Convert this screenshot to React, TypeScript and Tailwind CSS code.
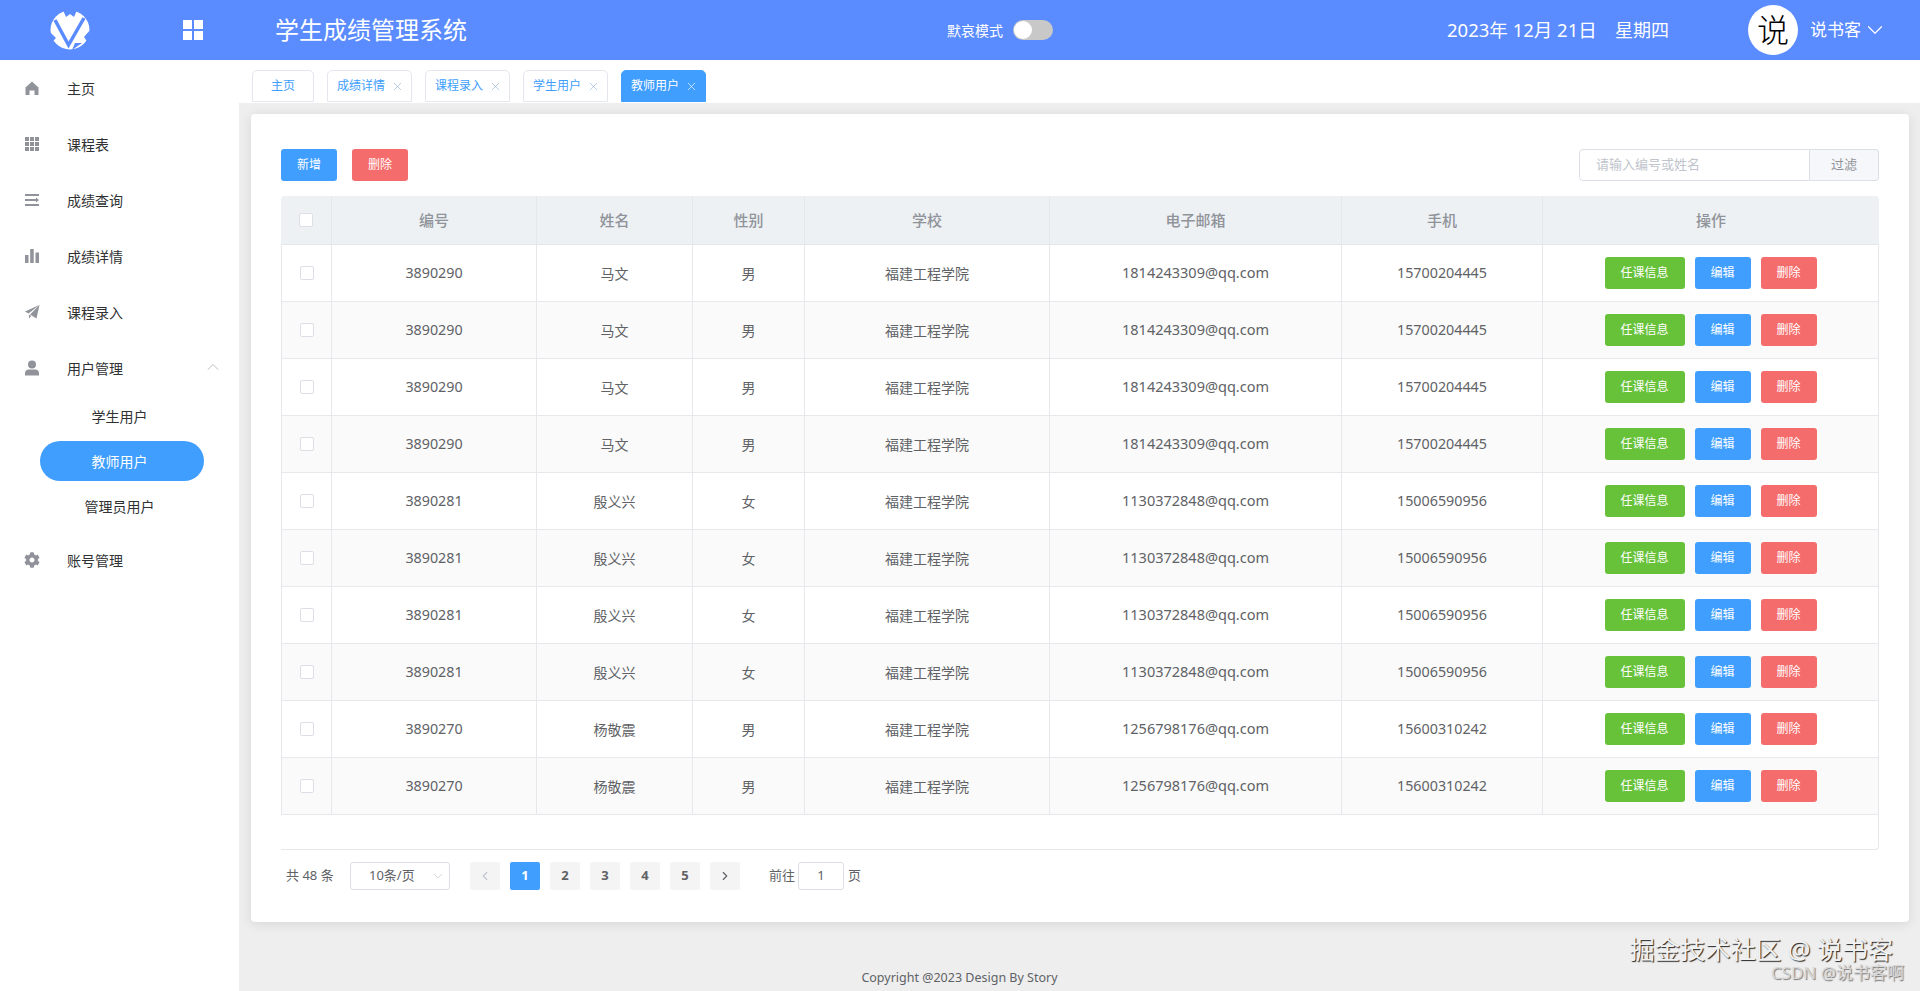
import React from "react";
import { ChevronDown, ChevronLeft, ChevronRight, ChevronUp, X } from "lucide-react";
import { FaCog } from "react-icons/fa";

function HomeIcon() {
  return (
    <svg width="16" height="16" viewBox="0 0 16 16" fill="#909399">
      <path d="M8 1.5 14.5 7.5V15H10.5V10.5H5.5V15H1.5V7.5Z" />
    </svg>
  );
}

function GridIcon() {
  return (
    <svg width="16" height="16" viewBox="0 0 16 16" fill="#909399">
      <path d="M1 1h4v4H1zM6 1h4v4H6zM11 1h4v4h-4zM1 6h4v4H1zM6 6h4v4H6zM11 6h4v4h-4zM1 11h4v4H1zM6 11h4v4H6zM11 11h4v4h-4z" />
    </svg>
  );
}

function ListIcon() {
  return (
    <svg width="16" height="16" viewBox="0 0 16 16" fill="#909399">
      <path d="M1 2h14v2H1zM1 7h11V5.5L15 8l-3 2.5V9H1zM1 12h14v2H1z" />
    </svg>
  );
}

function BarsIcon() {
  return (
    <svg width="16" height="16" viewBox="0 0 16 16" fill="#909399">
      <path d="M1 7h3.500v8H1zM6.200 1h3.500v14H6.200zM11.500 4.500H15V15h-3.500z" />
    </svg>
  );
}

function PlaneIcon() {
  return (
    <svg width="16" height="16" viewBox="0 0 16 16" fill="#909399">
      <path d="M15.500 1 1 7.500l3.500 2L15.500 1ZM15.500 1 6 10.500l6.500 4L15.500 1ZM4.800 10.500l.4 4 2-2.400Z" />
    </svg>
  );
}

function UserIcon() {
  return (
    <svg width="16" height="16" viewBox="0 0 16 16" fill="#909399">
      <circle cx="8" cy="4.500" r="4" />
      <path d="M1 13c0-2.200 2-3.500 3.500-3.500h7c1.500 0 3.500 1.300 3.500 3.500v2.500H1Z" />
    </svg>
  );
}

function Logo() {
  return (
    <svg width="40" height="40" viewBox="0 0 40 40" className="shrink-0">
      <circle cx="20" cy="20" r="19.500" fill="#ffffff" />
      <path d="M5 10 18.500 35 34 8" fill="none" stroke="#5a8bff" strokeWidth="3.500" />
      <path d="M13 0 16 7 20 4 24 7 27 0Z" fill="#5a8bff" />
      <path d="M0 22 6 28 2 32ZM40 20 34 27 38 33ZM22 40 32 33 25 33Z" fill="#5a8bff" />
    </svg>
  );
}

const menuTop = [
  { label: "主页", icon: HomeIcon },
  { label: "课程表", icon: GridIcon },
  { label: "成绩查询", icon: ListIcon },
  { label: "成绩详情", icon: BarsIcon },
  { label: "课程录入", icon: PlaneIcon },
];

const tabs = ["成绩详情", "课程录入", "学生用户"];

const people = [
  { id: "3890290", name: "马文", sex: "男", mail: "1814243309@qq.com", phone: "15700204445", n: 4 },
  { id: "3890281", name: "殷义兴", sex: "女", mail: "1130372848@qq.com", phone: "15006590956", n: 4 },
  { id: "3890270", name: "杨敬震", sex: "男", mail: "1256798176@qq.com", phone: "15600310242", n: 2 },
];

const rows = people.flatMap((p) => Array.from({ length: p.n }, () => p));

const headers = ["编号", "姓名", "性别", "学校", "电子邮箱", "手机", "操作"];

function Checkbox() {
  return <span className="block w-[14px] h-[14px] mx-auto bg-white border border-[#dcdfe6] rounded-[2px]" />;
}

function Sidebar() {
  return (
    <aside className="w-[239px] shrink-0 bg-white text-[14px] text-[#303133]">
      {menuTop.map((item) => {
        const Icon = item.icon;
        return (
          <div key={item.label} className="h-14 flex items-center pl-6">
            <Icon />
            <span className="ml-[27px]">{item.label}</span>
          </div>
        );
      })}
      <div className="h-14 flex items-center pl-6">
        <UserIcon />
        <span className="ml-[27px]">用户管理</span>
        <ChevronUp size={20} strokeWidth={0.9} className="ml-auto mr-4 -mt-[3px] text-[#a6a9ad]" />
      </div>
      <div className="flex flex-col gap-[5px] mb-[6px]">
        <div className="h-10 flex items-center justify-center ml-10 w-[164px] pr-[5px]">学生用户</div>
        <div className="h-10 flex items-center justify-center ml-10 w-[164px] pr-[5px] rounded-full bg-[#409eff] text-white">教师用户</div>
        <div className="h-10 flex items-center justify-center ml-10 w-[164px] pr-[5px]">管理员用户</div>
      </div>
      <div className="h-14 flex items-center pl-6">
        <FaCog size={16} color="#909399" />
        <span className="ml-[27px]">账号管理</span>
      </div>
    </aside>
  );
}

function TabBar() {
  return (
    <div className="h-[43px] shrink-0 bg-white pt-[10px] pl-[13px] flex items-start gap-[13px] text-[12px] text-[#409eff]">
      <div className="h-8 w-[62px] flex items-center justify-center border border-[#e4e7ed] rounded-t-[5px]">主页</div>
      {tabs.map((t) => (
        <div key={t} className="h-8 w-[85px] pl-[9px] flex items-center border border-[#e4e7ed] rounded-t-[5px]">
          {t}
          <X size={13} strokeWidth={1.2} className="ml-[6px] text-[#8fb0d8]" />
        </div>
      ))}
      <div className="h-8 w-[85px] pl-[9px] flex items-center border border-[#409eff] bg-[#409eff] text-white rounded-t-[5px]">
        教师用户
        <X size={13} strokeWidth={1.2} className="ml-[6px]" />
      </div>
    </div>
  );
}

function DataTable() {
  return (
    <table className="w-[1598px] table-fixed border-separate border-spacing-0 text-[14px] text-[#606266]">
      <colgroup>
        <col className="w-[51px]" />
        <col className="w-[205px]" />
        <col className="w-[156px]" />
        <col className="w-[112px]" />
        <col className="w-[245px]" />
        <col className="w-[292px]" />
        <col className="w-[201px]" />
        <col />
      </colgroup>
      <thead>
        <tr>
          <th className="h-[49px] bg-[#edf1f4] border-b border-r border-[#e4e8ec] rounded-tl-[4px] p-0">
            <Checkbox />
          </th>
          {headers.map((h, i) => (
            <th
              key={h}
              className={
                i === headers.length - 1
                  ? "h-[49px] bg-[#edf1f4] border-b border-[#e4e8ec] rounded-tr-[4px] p-0 font-medium text-[15px] text-[#909399]"
                  : "h-[49px] bg-[#edf1f4] border-b border-r border-[#e4e8ec] p-0 font-medium text-[15px] text-[#909399]"
              }
            >
              {h}
            </th>
          ))}
        </tr>
      </thead>
      <tbody>
        {rows.map((r, i) => (
          <tr key={i} className={i % 2 === 1 ? "bg-[#fafafa]" : "bg-white"}>
            <td className="h-[57px] p-0 border-b border-l border-r border-[#e6e8eb]">
              <Checkbox />
            </td>
            <td className="p-0 text-center text-[14.3px] border-b border-r border-[#e6e8eb]">{r.id}</td>
            <td className="p-0 text-center border-b border-r border-[#e6e8eb]">{r.name}</td>
            <td className="p-0 text-center border-b border-r border-[#e6e8eb]">{r.sex}</td>
            <td className="p-0 text-center border-b border-r border-[#e6e8eb]">福建工程学院</td>
            <td className="p-0 text-center text-[14.5px] border-b border-r border-[#e6e8eb]">{r.mail}</td>
            <td className="p-0 text-center text-[14.3px] border-b border-r border-[#e6e8eb]">{r.phone}</td>
            <td className="p-0 border-b border-r border-[#e6e8eb]">
              <div className="flex justify-center gap-[10px] text-[12px] text-white -mt-[1px]">
                <span className="w-20 h-8 flex items-center justify-center rounded-[3px] bg-[#67c23a]">任课信息</span>
                <span className="w-14 h-8 flex items-center justify-center rounded-[3px] bg-[#409eff]">编辑</span>
                <span className="w-14 h-8 flex items-center justify-center rounded-[3px] bg-[#f56c6c]">删除</span>
              </div>
            </td>
          </tr>
        ))}
      </tbody>
    </table>
  );
}

function Pagination() {
  return (
    <div className="mt-3 flex items-center h-7 text-[13px] text-[#606266]">
      <span className="ml-[5px] w-[64px]">共 48 条</span>
      <div className="w-[100px] h-7 flex items-center pl-[18px] border border-[#dcdfe6] rounded-[3px]">
        10条/页
        <ChevronDown size={16} strokeWidth={1} className="ml-auto mr-[3px] text-[#c0c4cc]" />
      </div>
      <div className="ml-5 flex gap-[10px] font-bold">
        <span className="w-[30px] h-7 flex items-center justify-center rounded-[2px] bg-[#f4f4f5] text-[#c0c4cc]">
          <ChevronLeft size={14} strokeWidth={2} />
        </span>
        {[1, 2, 3, 4, 5].map((n) => (
          <span
            key={n}
            className={
              n === 1
                ? "w-[30px] h-7 flex items-center justify-center rounded-[2px] bg-[#409eff] text-white"
                : "w-[30px] h-7 flex items-center justify-center rounded-[2px] bg-[#f4f4f5]"
            }
          >
            {n}
          </span>
        ))}
        <span className="w-[30px] h-7 flex items-center justify-center rounded-[2px] bg-[#f4f4f5]">
          <ChevronRight size={14} strokeWidth={2} />
        </span>
      </div>
      <span className="ml-[29px]">前往</span>
      <span className="ml-[3px] w-[46px] h-7 flex items-center justify-center border border-[#dcdfe6] rounded-[3px]">1</span>
      <span className="ml-1">页</span>
    </div>
  );
}

export default function App() {
  return (
    <div className="relative h-screen flex flex-col overflow-hidden bg-[#eeeeee] [font-family:'Noto_Sans','Noto_Sans_CJK_SC',sans-serif]">
      <header className="h-[60px] shrink-0 bg-[#5a8bff] flex items-center text-white">
        <div className="ml-[50px]">
          <Logo />
        </div>
        <div className="ml-[93px] grid grid-cols-2 gap-[2px]">
          <span className="w-[9px] h-[9px] bg-white" />
          <span className="w-[9px] h-[9px] bg-white" />
          <span className="w-[9px] h-[9px] bg-white" />
          <span className="w-[9px] h-[9px] bg-white" />
        </div>
        <h1 className="ml-[72px] w-[192px] text-[24px] font-normal">学生成绩管理系统</h1>
        <span className="ml-[480px] text-[14px]">默哀模式</span>
        <span className="ml-[10px] w-10 h-5 rounded-full bg-[#c8c8c8] flex items-center">
          <span className="w-[18px] h-[18px] ml-px rounded-full bg-white" />
        </span>
        <span className="ml-[394px] w-[168px] text-[18.5px] whitespace-pre">2023年 12月 21日</span>
        <span className="w-[53px] text-[18px] whitespace-pre">星期四</span>
        <span className="ml-[80px] w-[50px] h-[50px] rounded-full bg-white flex items-center justify-center text-[32px] font-light text-black">说</span>
        <span className="ml-3 text-[17px]">说书客</span>
        <ChevronDown size={26} strokeWidth={1.100} className="ml-px" />
      </header>
      <div className="flex-1 flex min-h-0">
        <Sidebar />
        <main className="flex-1 flex flex-col min-w-0">
          <TabBar />
          <section className="mt-[11px] ml-3 mr-[11px] h-[808px] shrink-0 bg-white rounded-[4px] shadow-[0_2px_12px_rgba(0,0,0,0.1)] pt-[35px] px-[30px]">
            <div className="flex h-8 mb-[15px] text-[12px] text-white">
              <span className="w-14 flex items-center justify-center rounded-[3px] bg-[#409eff]">新增</span>
              <span className="ml-[15px] w-14 flex items-center justify-center rounded-[3px] bg-[#f56c6c]">删除</span>
              <div className="ml-auto flex text-[13px]">
                <span className="w-[231px] pl-4 flex items-center border border-[#dcdfe6] rounded-l-[4px] text-[#c0c4cc]">请输入编号或姓名</span>
                <span className="w-[69px] flex items-center justify-center border border-l-0 border-[#dcdfe6] rounded-r-[4px] bg-[#f5f7fa] text-[#909399]">过滤</span>
              </div>
            </div>
            <DataTable />
            <div className="h-[35px] border-r border-b border-[#e6e8eb] rounded-br-[4px]" />
            <Pagination />
          </section>
          <footer className="mt-auto h-[28px] pt-[6px] pr-[240px] text-center text-[12.5px] text-[#606266]">Copyright @2023 Design By Story</footer>
        </main>
      </div>
      <div className="absolute right-[27px] top-[936px] text-[25.3px] leading-[26px] whitespace-pre text-[#f2f2f2] [text-shadow:1px_1px_1px_#222]">掘金技术社区 @ 说书客</div>
      <div className="absolute right-[16px] top-[963px] text-[17px] leading-[20px] whitespace-pre text-[#d8d8d8] [text-shadow:1px_1px_1px_#777]">CSDN @说书客啊</div>
    </div>
  );
}
